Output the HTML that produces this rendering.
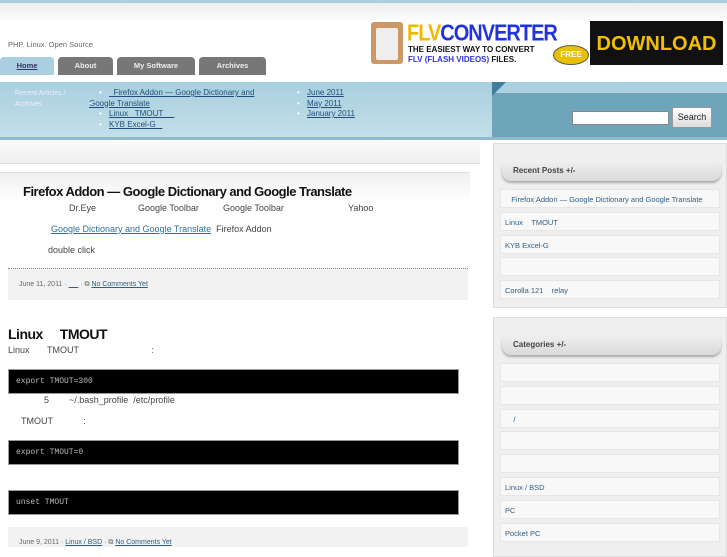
<!DOCTYPE html>
<html><head><meta charset="utf-8"><style>
*{margin:0;padding:0;box-sizing:border-box}
body{width:727px;height:545px;overflow:hidden;background:#fff;font-family:"Liberation Sans","Noto Sans CJK SC",sans-serif;position:relative;color:#444}
.abs{position:absolute}
a{color:#2f5f82;text-decoration:underline}
.tab{position:absolute;top:57px;height:18px;background:#777;color:#eee;font-size:7.5px;font-weight:bold;text-align:center;line-height:18px;border-radius:4px 4px 0 0}
.band a{color:#1f4f7a;font-size:8px}
.band li{list-style:none;font-size:8px;line-height:10.5px;padding-left:10px;position:relative}
.band li:before{content:"•";color:#fff;position:absolute;left:0}
.code{position:absolute;left:8px;width:451px;background:#000;color:#bbb;font-family:"Liberation Mono",monospace;font-size:8px;padding-left:7px;border:1px solid #999}
.p{position:absolute;font-size:9px;color:#444}
.wbox{position:absolute;left:493px;width:234px;background:#efefef;border:1px solid #ddd}
.wh{position:absolute;left:8px;width:219px;height:22px;background:linear-gradient(#f2f2f2,#d9d9d9);border-radius:9px;box-shadow:0 2px 2px #aaa;font-size:8px;font-weight:bold;color:#444;padding:7px 11px}
.wi{position:absolute;left:6px;width:220px;height:19px;background:#f8f8f8;border:1px solid #e6e6e6;font-size:7.5px;color:#2f5f82;padding:5px 4px}
</style></head><body>
<div class="abs" style="left:0;top:0;width:727px;height:3px;background:#a9cfe0"></div>
<div class="abs" style="left:0;top:3px;width:727px;height:20px;background:linear-gradient(#eee,#fff)"></div>
<div class="abs" style="left:8px;top:40px;font-size:7.5px;color:#666">PHP. Linux. Open Source</div>
<div class="tab" style="left:0;width:54px;background:#a9cfe0;color:#336;font-weight:bold;text-decoration:underline">Home</div>
<div class="tab" style="left:58px;width:55px">About</div>
<div class="tab" style="left:117px;width:78px">My Software</div>
<div class="tab" style="left:199px;width:67px">Archives</div>
<div class="abs" style="left:371px;top:22px;width:32px;height:42px;background:#c96;border-radius:3px"></div>
<div class="abs" style="left:376px;top:28px;width:22px;height:32px;background:#eee;border-radius:2px"></div>
<div class="abs" style="left:407px;top:21px;font-size:20px;font-weight:bold;color:#2233dd;letter-spacing:-1px;transform:scaleY(1.15);transform-origin:0 0"><span style="color:#f0b800">FLV</span>CONVERTER</div>
<div class="abs" style="left:408px;top:45px;font-size:8px;font-weight:bold;color:#111;line-height:10px">THE EASIEST WAY TO CONVERT<br><span style="color:#3333dd">FLV (FLASH VIDEOS)</span> FILES.</div>
<div class="abs" style="left:553px;top:45px;width:36px;height:20px;border-radius:50%;background:#e8c000;border:1px solid #555;font-size:8px;font-weight:bold;color:#fff;text-align:center;line-height:18px">FREE</div>
<div class="abs" style="left:590px;top:21px;width:133px;height:44px;background:#111;color:#f0c000;font-size:20px;font-weight:bold;text-align:center;line-height:46px">DOWNLOAD</div>
<div class="abs band" style="left:0;top:82px;width:727px;height:56px;background:linear-gradient(#a8cfdf,#c3dfe8)">
<div class="abs" style="left:15px;top:6px;color:#eef;font-size:7px;line-height:11px">Recent Articles /<br>Archives</div>
<ul class="abs" style="left:99px;top:6px;width:175px">
<li><a>&nbsp;&nbsp;Firefox Addon — Google Dictionary and</a></li>
<li style="margin-left:-10px;padding-left:0"><a>Google Translate</a></li>
<li><a>Linux &nbsp;&nbsp;TMOUT&nbsp;&nbsp;&nbsp;&nbsp;&nbsp;</a></li>
<li><a>KYB Excel-G &nbsp;&nbsp;</a></li></ul>
<ul class="abs" style="left:297px;top:6px"><li><a>June 2011</a></li><li><a>May 2011</a></li><li><a>January 2011</a></li></ul>
</div>
<div class="abs" style="left:492px;top:93px;width:235px;height:45px;background:#6fa5bb"></div>
<div class="abs" style="left:492px;top:82px;width:0;height:0;border-left:14px solid #3f7f9c;border-bottom:14px solid transparent"></div>
<div class="abs" style="left:572px;top:111px;width:97px;height:14px;background:#fff;border:1px solid #888"></div>
<div class="abs" style="left:672px;top:107px;width:40px;height:21px;background:linear-gradient(#fff,#ddd);border:1px solid #999;font-size:9px;text-align:center;line-height:19px;color:#222;border-radius:2px">Search</div>
<div class="abs" style="left:0;top:137px;width:727px;height:3px;background:#8fb9cc"></div>
<div class="abs" style="left:0;top:142px;width:480px;height:22px;background:linear-gradient(#fafafa,#eee);border-bottom:1px solid #ddd"></div>
<div class="abs" style="left:0;top:172px;width:470px;height:100px;background:linear-gradient(#f0f0f0,#fff 30%);border-top:1px solid #ddd"></div>
<div class="abs" style="left:23px;top:184px;font-size:13px;font-weight:bold;color:#111;letter-spacing:-.5px">Firefox Addon — Google Dictionary and Google Translate</div>
<div class="p" style="top:203px;left:69px">Dr.Eye</div><div class="p" style="top:203px;left:138px">Google Toolbar</div><div class="p" style="top:203px;left:223px">Google Toolbar</div><div class="p" style="top:203px;left:348px">Yahoo</div>
<div class="p" style="top:224px;left:51px"><a style="color:#2f6f96">Google Dictionary and Google Translate</a>&nbsp; Firefox Addon</div>
<div class="p" style="top:245px;left:48px">double click</div>
<div class="abs" style="left:8px;top:268px;width:460px;height:32px;background:#f2f2f2;border-top:1px dotted #888"></div>
<div class="abs" style="left:19px;top:281px;font-size:7px;color:#666">June 11, 2011 · <a>&nbsp;&nbsp;&nbsp;&nbsp;&nbsp;</a> · ⧉ <a>No Comments Yet</a></div>
<div class="abs" style="left:8px;top:326px;font-size:14px;font-weight:bold;color:#111;letter-spacing:-.5px">Linux &nbsp;&nbsp;&nbsp; TMOUT</div>
<div class="p" style="top:345px;left:8px">Linux &nbsp;&nbsp;&nbsp;&nbsp;&nbsp;&nbsp;TMOUT <span style="margin-left:70px">:</span></div>
<div class="code" style="top:369px;height:25px;line-height:23px">export TMOUT=300</div>
<div class="p" style="top:395px;left:44px">5 &nbsp;&nbsp;&nbsp;&nbsp;&nbsp;&nbsp;&nbsp;~/.bash_profile &nbsp;/etc/profile</div>
<div class="p" style="top:416px;left:21px">TMOUT <span style="margin-left:28px">:</span></div>
<div class="code" style="top:440px;height:25px;line-height:23px">export TMOUT=0</div>
<div class="code" style="top:490px;height:25px;line-height:23px">unset TMOUT</div>
<div class="abs" style="left:8px;top:527px;width:460px;height:20px;background:#f2f2f2"></div>
<div class="abs" style="left:19px;top:539px;font-size:7px;color:#666">June 9, 2011 · <a>Linux / BSD</a> · ⧉ <a>No Comments Yet</a></div>
<div class="wbox" style="top:143px;height:165px">
<div class="wh" style="top:15px">Recent Posts +/-</div>
<div class="wi" style="top:45px">&nbsp;&nbsp;&nbsp;Firefox Addon — Google Dictionary and Google Translate</div>
<div class="wi" style="top:68px">Linux &nbsp;&nbsp;&nbsp;TMOUT</div>
<div class="wi" style="top:91px">KYB Excel-G</div>
<div class="wi" style="top:113px"></div>
<div class="wi" style="top:136px">Corolla 121 &nbsp;&nbsp;&nbsp;relay</div>
</div>
<div class="wbox" style="top:317px;height:240px">
<div class="wh" style="top:15px">Categories +/-</div>
<div class="wi" style="top:45px"></div>
<div class="wi" style="top:68px"></div>
<div class="wi" style="top:91px">&nbsp;&nbsp;&nbsp;&nbsp;/</div>
<div class="wi" style="top:113px"></div>
<div class="wi" style="top:136px"></div>
<div class="wi" style="top:159px">Linux / BSD</div>
<div class="wi" style="top:182px">PC</div>
<div class="wi" style="top:205px">Pocket PC</div>
</div>
</body></html>
